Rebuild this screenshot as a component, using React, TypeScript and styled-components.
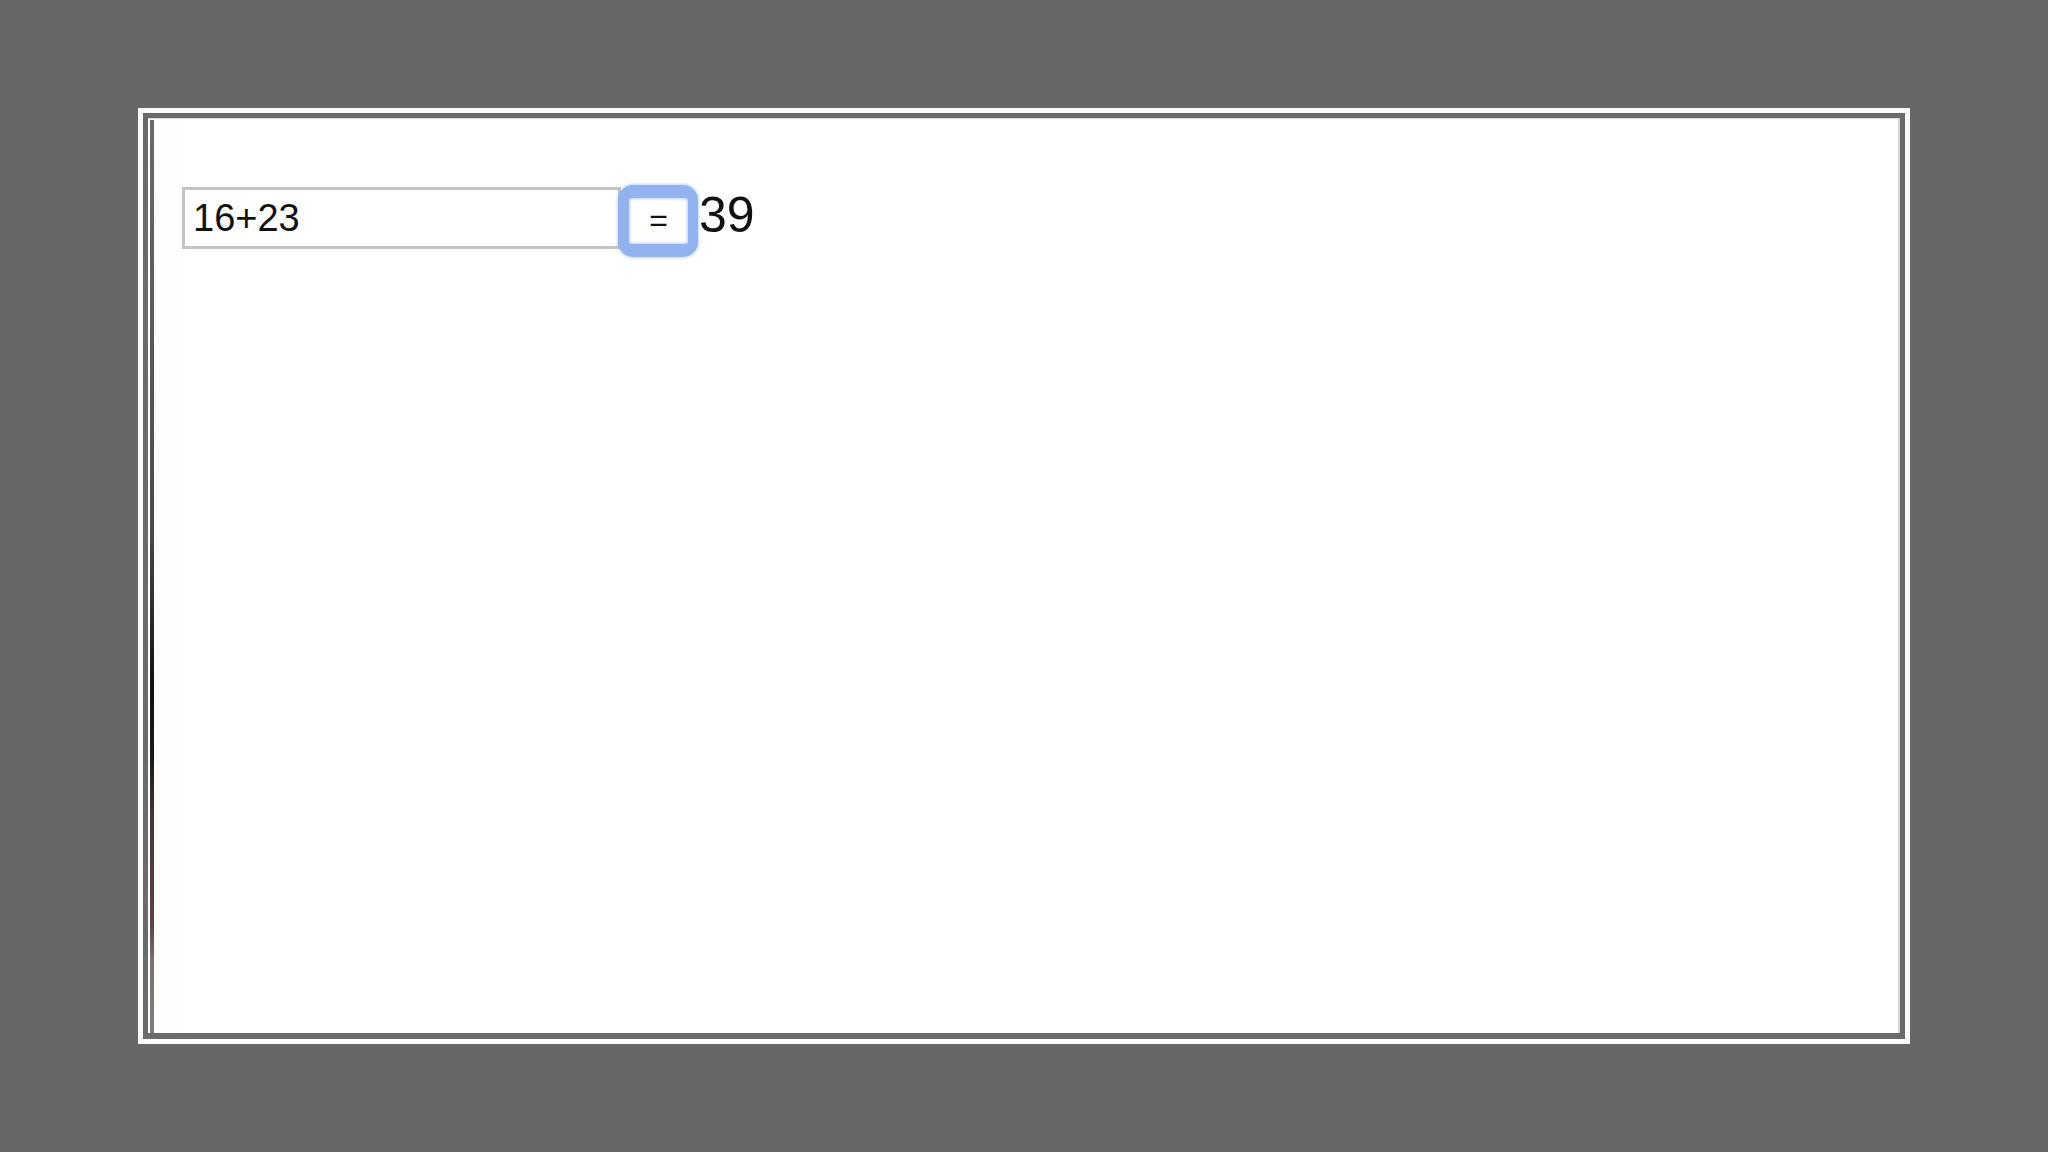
import React, { useState } from "react";
import styled, { createGlobalStyle } from "styled-components";

const GlobalStyle = createGlobalStyle`
  html, body {
    margin: 0;
    padding: 0;
    background: #686768;
  }
  body {
    font-family: "Liberation Sans", Arial, sans-serif;
  }
  * { box-sizing: border-box; }
`;

const Stage = styled.div`
  width: 2048px;
  height: 1152px;
  padding: 108px 0 0 138px;
  background: #686768;
`;

const Frame = styled.div`
  width: 1772px;
  height: 936px;
  border: 5px solid #fbfbfb;
  background: #6b6b6b;
  padding: 5px 5px 6px 5px;
`;

const Viewport = styled.div`
  height: 100%;
  background: #ffffff;
  border-top: 1px solid #dcdcdc;
  border-right: 2px solid #d6d6d6;
  padding: 1px 0 0 2px;
`;

const Page = styled.div`
  height: 100%;
  border-left: 4px solid #5e5e5e;
  border-image: linear-gradient(
      to bottom,
      #6a6a6a 0%,
      #4a4a4a 45%,
      #111111 62%,
      #1a1a1a 70%,
      #4a3436 76%,
      #5a4244 88%,
      #7a7373 92%,
      #7e7e7e 100%
    )
    1;
  padding: 65px 0 0 28px;
  background: linear-gradient(to right, #fffdfa 0px, #ffffff 40px);
`;

const Row = styled.div`
  display: flex;
  align-items: flex-start;
`;

const ExpressionInput = styled.input`
  width: 439px;
  height: 62px;
  margin-top: 2px;
  border: 3px solid #c4c4c4;
  padding: 0 8px;
  font-family: "Liberation Sans", Arial, sans-serif;
  font-size: 38px;
  color: #111111;
  background: #ffffff;
  outline: none;
`;

const EqualsButton = styled.button`
  position: relative;
  z-index: 1;
  margin-left: -3px;
  width: 80px;
  height: 72px;
  border-style: solid;
  border-color: #92b2f0;
  border-width: 13px 10px 13px 11px;
  border-radius: 15px;
  background: #ffffff;
  box-shadow: inset 0 0 3px 1px rgba(110, 150, 230, 0.45),
    0 0 3px 1px rgba(150, 185, 245, 0.55);
  padding: 0 0 2px 0;
  display: flex;
  align-items: center;
  justify-content: center;
  font-family: "Liberation Sans", Arial, sans-serif;
  font-size: 32px;
  color: #111111;
  cursor: pointer;
`;

const Result = styled.span`
  margin-top: 5px;
  margin-left: 1px;
  font-family: "Liberation Sans", Arial, sans-serif;
  font-size: 50px;
  line-height: 1;
  color: #111111;
`;

export default function App() {
  const [expr, setExpr] = useState("16+23");
  const [result, setResult] = useState("39");

  const evaluate = () => {
    const parts = expr.split("+").map((p) => Number(p.trim()));
    if (parts.every((n) => !Number.isNaN(n))) {
      setResult(String(parts.reduce((a, b) => a + b, 0)));
    }
  };

  return (
    <>
      <GlobalStyle />
      <Stage>
        <Frame>
          <Viewport>
            <Page>
              <Row>
                <ExpressionInput
                  value={expr}
                  onChange={(e) => setExpr(e.target.value)}
                />
                <EqualsButton onClick={evaluate}>=</EqualsButton>
                <Result>{result}</Result>
              </Row>
            </Page>
          </Viewport>
        </Frame>
      </Stage>
    </>
  );
}
